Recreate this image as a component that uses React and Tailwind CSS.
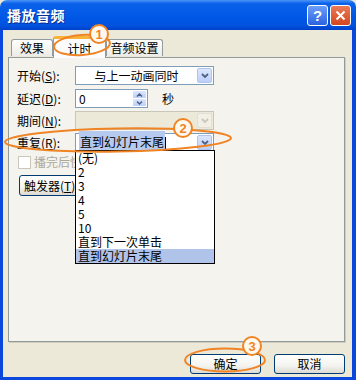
import React from 'react';

const Chevron = ({ up = false, color = '#4d6185' }) => (
	<svg width="8" height="5" viewBox="0 0 8 5">
		<path
			d={up ? 'M1 4 L4 1 L7 4' : 'M1 1 L4 4 L7 1'}
			fill="none"
			stroke={color}
			strokeWidth="1.8"
		/>
	</svg>
);

const ComboArrow = ({ disabled = false }) => (
	<div
		className={`w-[15px] h-[15px] rounded-[2px] flex items-center justify-center border ${
			disabled
				? 'border-[#e1dfd6] bg-[#f1efe6]'
				: 'border-[#b1c4f0] bg-[linear-gradient(180deg,#dce6fd_0%,#bccffa_100%)]'
		}`}
	>
		<Chevron color={disabled ? '#c9c7ba' : '#4d6185'} />
	</div>
);

const Label = ({ text, k }) => (
	<span className="w-[58px] shrink-0">
		{text}(<u>{k}</u>):
	</span>
);

const XpButton = ({ children, className = '' }) => (
	<div
		className={`h-[20px] rounded-[3px] border border-[#003c74] bg-[linear-gradient(180deg,#ffffff_0%,#f3f3ef_60%,#dcdad2_100%)] flex items-center justify-center ${className}`}
	>
		{children}
	</div>
);

const items = ['(无)', '2', '3', '4', '5', '10', '直到下一次单击', '直到幻灯片末尾'];

export default function App() {
	return (
		<div className="relative w-[356px] h-[380px] overflow-hidden font-['Noto_Sans_CJK_SC',sans-serif] text-[12px] text-black leading-none bg-[#ece9d8]">
			{/* title bar */}
			<div className="h-[30px] rounded-t-[7px] bg-[linear-gradient(180deg,#4b95f8_0%,#0a62ea_12%,#0058e6_55%,#0052df_85%,#0040c8_100%)] flex items-center pl-[7px] pr-[5px]">
				<span className="text-white font-bold text-[14px] tracking-[0.5px] [text-shadow:1px_1px_0_#0a2d8c]">
					播放音频
				</span>
				<div className="ml-auto flex gap-[2px]">
					<div className="w-[21px] h-[21px] rounded-[3px] border border-white bg-[linear-gradient(180deg,#6d9ef9_0%,#2a63e0_100%)] flex items-center justify-center text-white font-bold text-[15px] font-['Liberation_Sans',sans-serif]">
						?
					</div>
					<div className="w-[21px] h-[21px] rounded-[3px] border border-white bg-[linear-gradient(180deg,#ec7b57_0%,#d24620_100%)] flex items-center justify-center">
						<svg width="11" height="11" viewBox="0 0 11 11">
							<path d="M1.5 1.5 L9.5 9.5 M9.5 1.5 L1.5 9.5" stroke="#fff" strokeWidth="2" />
						</svg>
					</div>
				</div>
			</div>

			{/* body */}
			<div className="h-[350px] border-l-[3px] border-r-[4px] border-b-[3px] border-[#0a47dc] bg-[#ece9d8] flex flex-col">
				{/* tabs */}
				<div className="h-[24px] mt-[3px] pl-[8px] flex items-end relative z-10">
					<div className="w-[42px] h-[17px] border border-b-0 border-[#919b9c] rounded-t-[3px] bg-[linear-gradient(180deg,#ffffff_0%,#ecebe6_100%)] flex items-center justify-center mb-px">
						效果
					</div>
					<div className="w-[53px] h-[22px] border border-b-0 border-[#919b9c] rounded-t-[3px] bg-[#fcfcfe] border-t-[3px] border-t-[#f7b43a] flex items-center justify-center -mb-px">
						计时
					</div>
					<div className="w-[57px] h-[17px] border border-b-0 border-[#919b9c] rounded-t-[3px] bg-[linear-gradient(180deg,#ffffff_0%,#ecebe6_100%)] flex items-center justify-center mb-px">
						音频设置
					</div>
				</div>

				{/* panel */}
				<div className="ml-[5px] w-[337px] h-[285px] border border-[#919b9c] shadow-[1px_1px_0_#d0cdc0] bg-[#f4f3ee] pt-[8px] pl-[8px] flex flex-col">
					<div className="h-[19px] flex items-center">
						<Label text="开始" k="S" />
						<div className="w-[139px] h-[19px] border border-[#7f9db9] bg-white flex items-center pr-[1px]">
							<span className="flex-1 text-center">与上一动画同时</span>
							<ComboArrow />
						</div>
					</div>

					<div className="h-[19px] mt-[4px] flex items-center">
						<Label text="延迟" k="D" />
						<div className="w-[73px] h-[19px] border border-[#7f9db9] bg-white flex items-center pl-[3px] pr-[1px]">
							<span className="flex-1">0</span>
							<div className="flex flex-col gap-px">
								<div className="w-[13px] h-[7px] rounded-[1px] bg-[linear-gradient(180deg,#dce6fd_0%,#bccffa_100%)] flex items-center justify-center">
									<svg width="7" height="4" viewBox="0 0 7 4">
										<path d="M1 3.5 L3.5 1 L6 3.5" fill="none" stroke="#4d6185" strokeWidth="1.5" />
									</svg>
								</div>
								<div className="w-[13px] h-[7px] rounded-[1px] bg-[linear-gradient(180deg,#dce6fd_0%,#bccffa_100%)] flex items-center justify-center">
									<svg width="7" height="4" viewBox="0 0 7 4">
										<path d="M1 0.5 L3.5 3 L6 0.5" fill="none" stroke="#4d6185" strokeWidth="1.5" />
									</svg>
								</div>
							</div>
						</div>
						<span className="ml-[14px]">秒</span>
					</div>

					<div className="h-[19px] mt-[3px] flex items-center">
						<Label text="期间" k="N" />
						<div className="w-[139px] h-[19px] border border-[#c9c7ba] bg-[#ece9d8] flex items-center justify-end pr-[1px]">
							<ComboArrow disabled />
						</div>
					</div>

					<div className="h-[19px] mt-[3px] flex items-center">
						<Label text="重复" k="R" />
						<div className="w-[139px] h-[19px] border border-[#7f9db9] bg-white flex items-center pl-[3px] pr-[1px]">
							<span className="flex-1">
								<span className="bg-[#b6c9ee] px-px py-[2px]">直到幻灯片末尾</span>
								<span className="inline-block w-px h-[12px] bg-black align-middle" />
							</span>
							<ComboArrow />
						</div>
					</div>

					<div className="h-[14px] mt-[3px] flex items-center pl-[1px] text-[#aca899]">
						<div className="w-[13px] h-[13px] border border-[#cac8bb] bg-white mr-[3px]" />
						播完后快退
					</div>

					<XpButton className="w-[80px] mt-[6px] ml-[2px] h-[21px] justify-start pl-[4px]">
						触发器(<u>T</u>)
					</XpButton>
				</div>

				{/* buttons */}
				<div className="mt-[12px] pr-[7px] flex justify-end gap-[13px]">
					<XpButton className="w-[71px]">确定</XpButton>
					<XpButton className="w-[71px]">取消</XpButton>
				</div>
			</div>

			{/* open dropdown list */}
			<div className="absolute left-[75px] top-[150px] w-[140px] h-[114px] border border-black bg-white z-20">
				{items.map((item, i) => (
					<div
						key={item}
						className={`h-[14px] flex items-center pl-[2px] ${
							i === items.length - 1 ? 'bg-[#b0c4ea]' : ''
						}`}
					>
						{item}
					</div>
				))}
			</div>

			{/* annotations */}
			<svg className="absolute inset-0 z-30 pointer-events-none" width="356" height="380">
				<g fill="none" stroke="#f08424" strokeWidth="2">
					<ellipse cx="82" cy="45" rx="28" ry="10" transform="rotate(-4 82 45)" />
					<ellipse cx="118" cy="140" rx="113" ry="11.5" transform="rotate(-1 118 140)" />
					<ellipse cx="225" cy="360" rx="40" ry="11.5" />
				</g>
			</svg>
			{[
				{ n: '1', cls: 'left-[89px] top-[24px]' },
				{ n: '2', cls: 'left-[173px] top-[118px]' },
				{ n: '3', cls: 'left-[242px] top-[336px]' },
			].map((c) => (
				<div
					key={c.n}
					className={`absolute z-40 w-[20px] h-[20px] rounded-full border-2 border-[#f08424] bg-[#fff8ee] text-[#f08424] font-bold text-[13px] font-['Liberation_Sans',sans-serif] flex items-center justify-center ${c.cls}`}
				>
					{c.n}
				</div>
			))}
		</div>
	);
}
